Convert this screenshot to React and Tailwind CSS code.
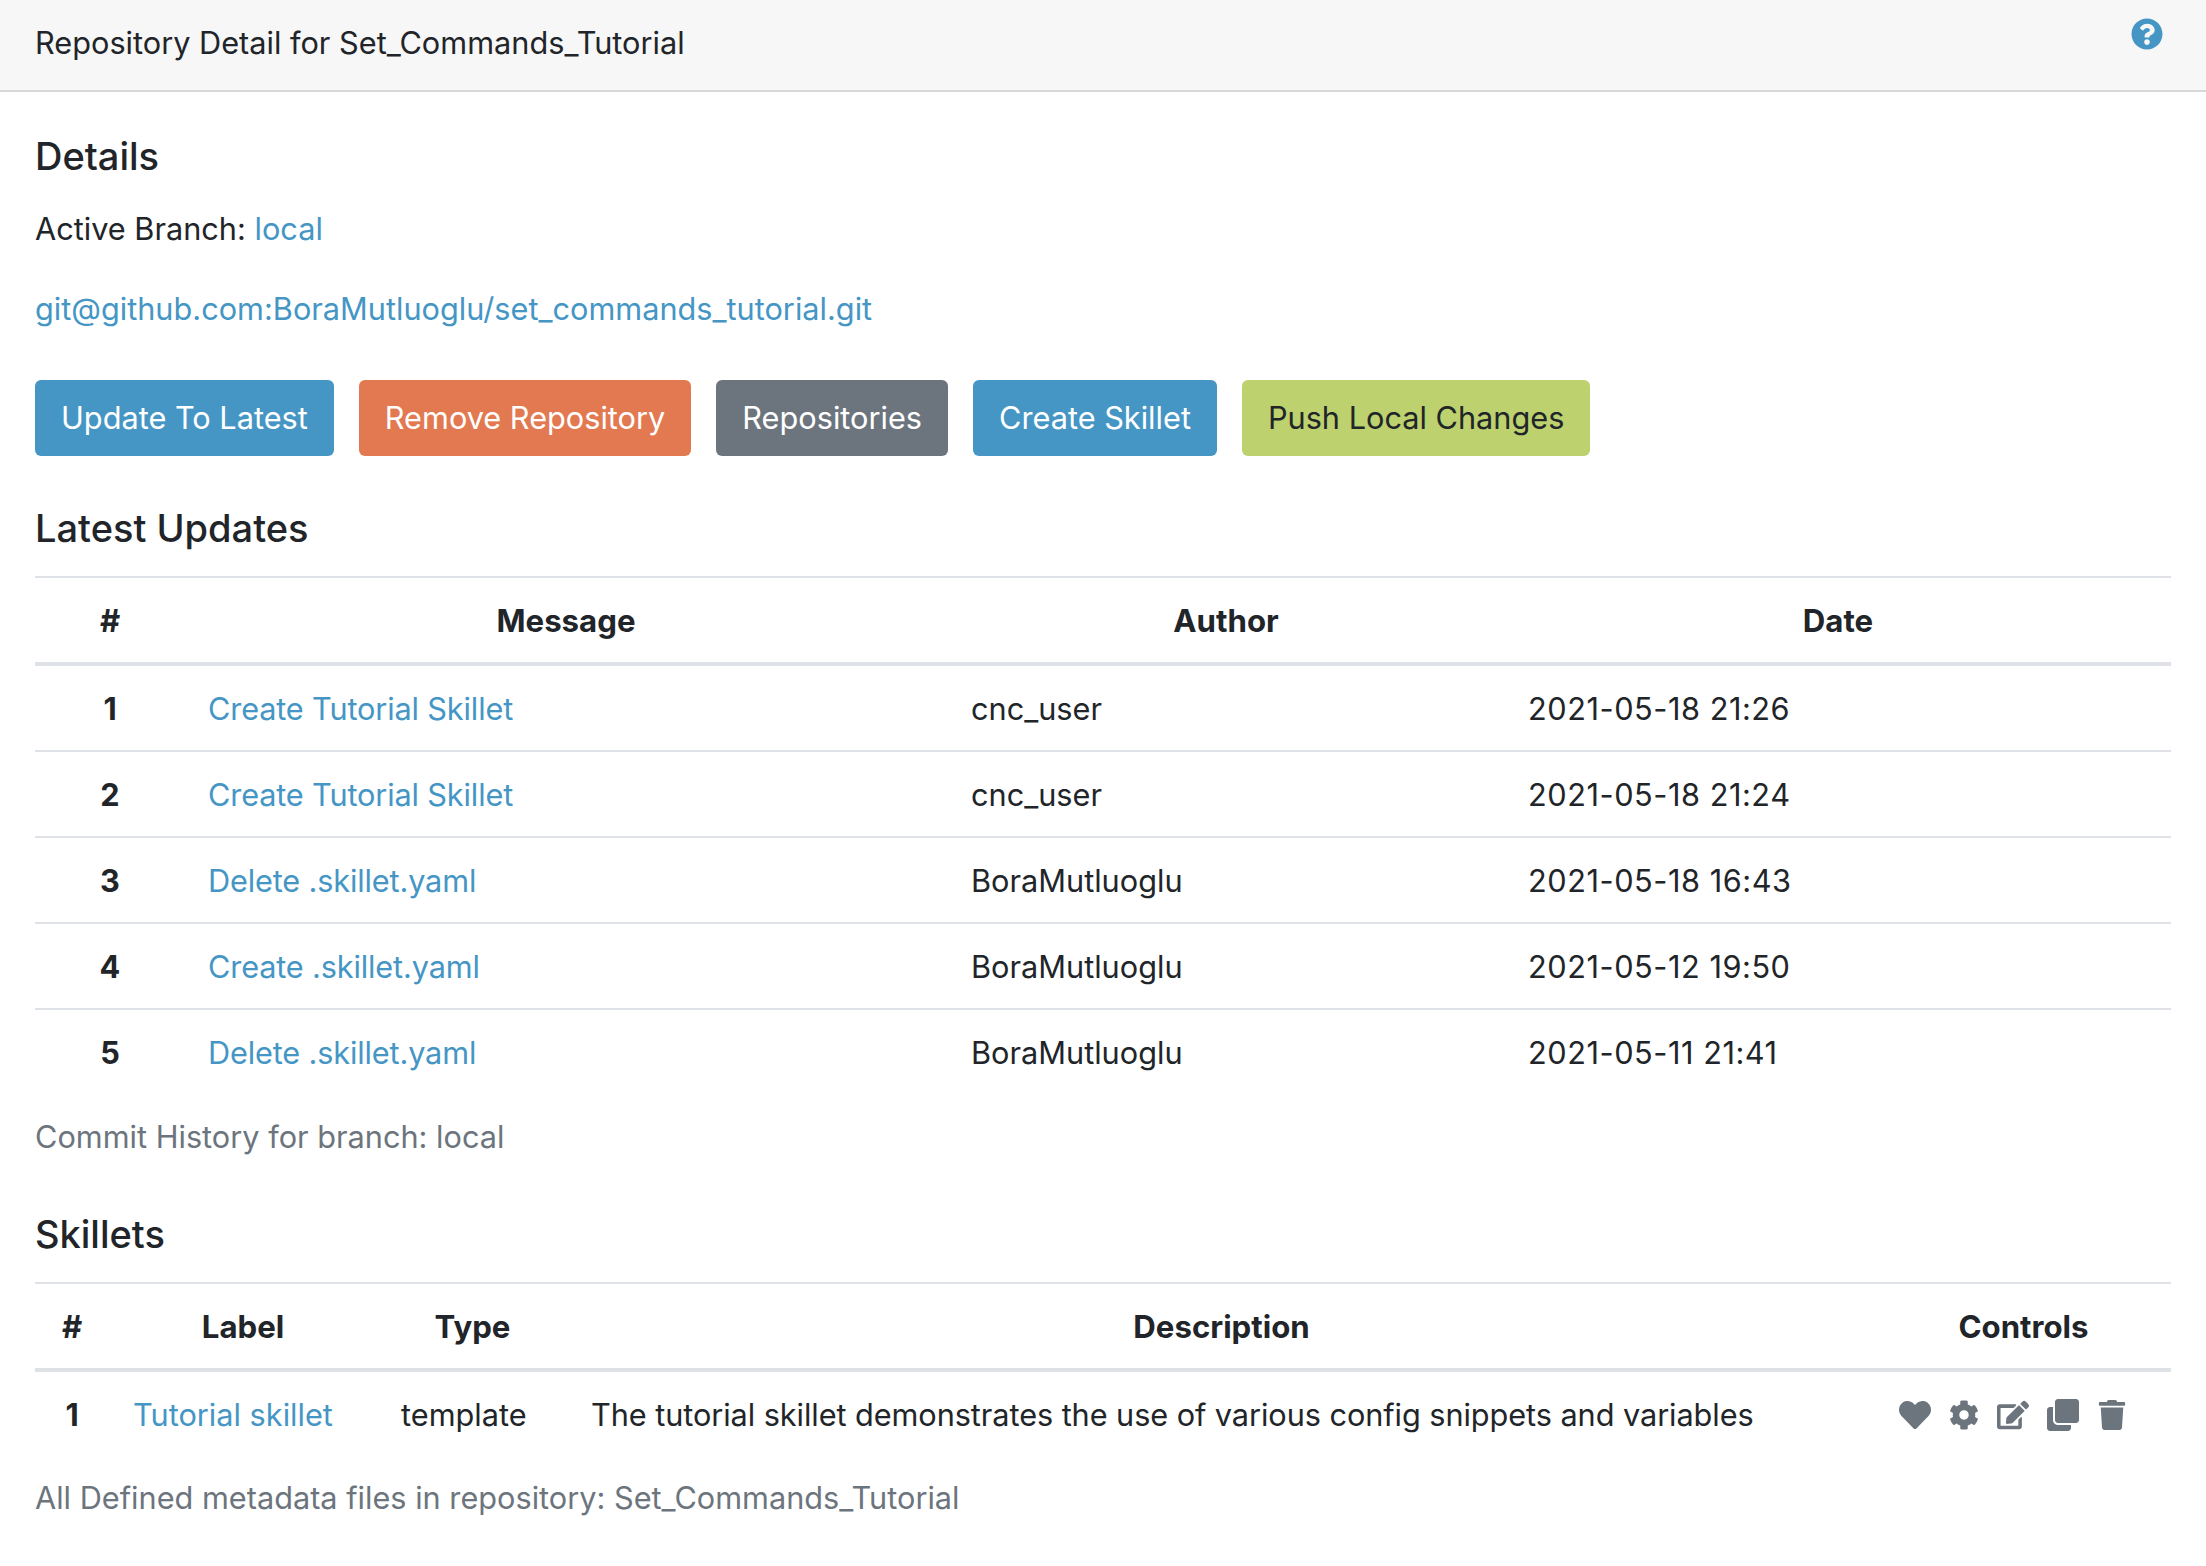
import React from "react";
import { FaHeart, FaCog, FaEdit, FaClone, FaTrash, FaQuestionCircle } from "react-icons/fa";

const commits = [
  ["1", "Create Tutorial Skillet", "cnc_user", "2021-05-18 21:26"],
  ["2", "Create Tutorial Skillet", "cnc_user", "2021-05-18 21:24"],
  ["3", "Delete .skillet.yaml", "BoraMutluoglu", "2021-05-18 16:43"],
  ["4", "Create .skillet.yaml", "BoraMutluoglu", "2021-05-12 19:50"],
  ["5", "Delete .skillet.yaml", "BoraMutluoglu", "2021-05-11 21:41"],
];

const th = "pl-[21px] pt-[22px] pb-[20px] text-center font-bold text-[31.2px] leading-[42px] border-t-2 border-b-[4px] border-[#dee2e6]";
const td = "px-[21px] pt-[22px] pb-[20px] text-[30.7px] leading-[42px] align-top";
const btn = "h-[76px] px-[26px] rounded-[6px] whitespace-nowrap";

export default function App() {
  return (
    <div className="min-h-[1566px] bg-white text-[#212529] font-['Inter','Liberation_Sans',sans-serif] text-[30.7px] leading-[42px]">
      <header className="h-[92px] bg-[#f7f7f7] border-b-2 border-[#d8d8d8] pl-[35px] pr-[43px] flex items-start justify-between">
        <h1 className="text-[30.7px] leading-[42px] mt-[22px] font-normal">Repository Detail for Set_Commands_Tutorial</h1>
        <FaQuestionCircle className="text-[#4596c5] mt-[18px] text-[32px]" />
      </header>

      <main className="px-[35px]">
        <h2 className="text-[38px] leading-[42px] font-medium mt-[43px]">Details</h2>
        <p className="mt-[31px]">Active Branch: <a className="text-[#4596c5]">local</a></p>
        <p className="mt-[38px]"><a className="text-[#4596c5]">git@github.com:BoraMutluoglu/set_commands_tutorial.git</a></p>

        <div className="mt-[50px] flex gap-[25px]">
          <button className={btn + " bg-[#4596c5] text-white"}>Update To Latest</button>
          <button className={btn + " bg-[#e37950] text-white"}>Remove Repository</button>
          <button className={btn + " bg-[#6c757d] text-white"}>Repositories</button>
          <button className={btn + " bg-[#4596c5] text-white"}>Create Skillet</button>
          <button className={btn + " bg-[#bdd16e] text-[#212529]"}>Push Local Changes</button>
        </div>

        <h2 className="text-[38px] leading-[42px] font-medium mt-[51px]">Latest Updates</h2>
        <table className="mt-[27px] w-full table-fixed border-collapse">
          <colgroup>
            <col className="w-[152px]" />
            <col className="w-[763px]" />
            <col className="w-[557px]" />
            <col />
          </colgroup>
          <thead>
            <tr>
              <th className={th + " pr-[23px]"}>#</th>
              <th className={th + " pr-[26px]"}>Message</th>
              <th className={th + " pr-[26px]"}>Author</th>
              <th className={th + " pr-[23px]"}>Date</th>
            </tr>
          </thead>
          <tbody>
            {commits.map((c, i) => (
              <tr key={c[0]} className={i > 0 ? "border-t-2 border-[#dee2e6]" : ""}>
                <td className={td + " font-bold text-center pr-[23px]"}>{c[0]}</td>
                <td className={td + " tracking-[-0.15px]"}><a className="text-[#4596c5]">{c[1]}</a></td>
                <td className={td}>{c[2]}</td>
                <td className={td + " tracking-[0.55px]"}>{c[3]}</td>
              </tr>
            ))}
          </tbody>
        </table>
        <p className="mt-[22px] text-[#6c757d]">Commit History for branch: local</p>

        <h2 className="text-[38px] leading-[42px] font-medium mt-[55px]">Skillets</h2>
        <table className="mt-[27px] w-full table-fixed border-collapse">
          <colgroup>
            <col className="w-[74px]" />
            <col className="w-[271px]" />
            <col className="w-[190px]" />
            <col className="w-[1306px]" />
            <col />
          </colgroup>
          <thead>
            <tr>
              <th className={th + " pr-[21px]"}>#</th>
              <th className={th + " pr-[24px]"}>Label</th>
              <th className={th + " pr-[26px]"}>Type</th>
              <th className={th + " pr-[24px]"}>Description</th>
              <th className={th + " pr-[21px]"}>Controls</th>
            </tr>
          </thead>
          <tbody>
            <tr>
              <td className={td + " font-bold text-center"}>1</td>
              <td className={td + " pl-[24px]"}><a className="text-[#4596c5]">Tutorial skillet</a></td>
              <td className={td}>template</td>
              <td className={td + " whitespace-nowrap tracking-[-0.07px]"}>The tutorial skillet demonstrates the use of various config snippets and variables</td>
              <td className={td}>
                <div className="flex items-center gap-[18px] text-[#6c757d] text-[32px] h-[42px] ml-[2px]">
                  <FaHeart />
                  <FaCog className="text-[30px]" />
                  <FaEdit />
                  <FaClone />
                  <FaTrash className="text-[30px]" />
                </div>
              </td>
            </tr>
          </tbody>
        </table>
        <p className="mt-[21px] text-[#6c757d]">All Defined metadata files in repository: Set_Commands_Tutorial</p>
      </main>
    </div>
  );
}
